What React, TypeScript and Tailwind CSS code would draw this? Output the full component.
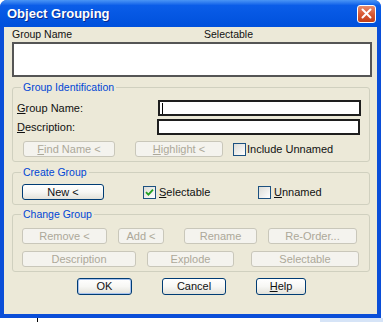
import React from 'react';

type BtnProps = {
  children: React.ReactNode;
  className?: string;
  disabled?: boolean;
  isDefault?: boolean;
};

function Btn({ children, className = '', disabled, isDefault }: BtnProps) {
  if (disabled) {
    return (
      <div className={`h-[16px] flex items-center justify-center rounded-[3px] border border-[#C9C7BA] bg-[#F4F3EE] text-[#ACA899] ${className}`}>
        {children}
      </div>
    );
  }
  return (
    <div
      className={`h-[16px] flex items-center justify-center rounded-[3px] border border-[#003C74] bg-linear-to-b from-white via-[#F7F7F4] to-[#E3E2DA] ${
        isDefault ? 'shadow-[inset_0_0_0_1px_#A7C2EE]' : ''
      } ${className}`}
    >
      {children}
    </div>
  );
}

function Check({ checked }: { checked?: boolean }) {
  return (
    <div className="w-[13px] h-[13px] border border-[#1C5180] bg-linear-to-br from-[#DCDCD7] to-white flex items-center justify-center shrink-0">
      {checked && (
        <svg width="9" height="9" viewBox="0 0 9 9">
          <path d="M1 4.2 L3.4 6.6 L8 1.6" fill="none" stroke="#21A121" strokeWidth={1.8} />
        </svg>
      )}
    </div>
  );
}

function Legend({ children }: { children: React.ReactNode }) {
  return <legend className="ml-[8px] px-[2px] text-[#0046D5] text-[10.5px] leading-[13px]">{children}</legend>;
}

export default function App() {
  return (
    <div className="w-[383px] h-[322px] bg-white relative overflow-hidden font-['Liberation_Sans',Arial,sans-serif] text-[11px] leading-[13px] text-[#111]">
      {/* Window frame */}
      <div className="w-[381px] h-[318px] bg-[#0A4ED8] rounded-t-[7px] flex flex-col px-[4px] pb-[4px]">
        {/* Title bar */}
        <div className="h-[27px] -mx-[4px] rounded-t-[7px] bg-linear-to-b from-[#4A95F5] via-[#0A5DE8] via-20% to-[#0050DC] flex items-center pl-[7px] pr-[5px] shrink-0">
          <span className="text-white font-bold text-[13px] leading-[15px] [text-shadow:1px_1px_#0B2C8F]">Object Grouping</span>
          <div className="ml-auto w-[19px] h-[18px] rounded-[3px] border border-white bg-linear-to-b from-[#E88C6C] via-[#D95A35] to-[#C13E17] flex items-center justify-center">
            <svg width="11" height="11" viewBox="0 0 11 11">
              <path d="M1.5 1.5 L9.5 9.5 M9.5 1.5 L1.5 9.5" stroke="white" strokeWidth={2} strokeLinecap="round" />
            </svg>
          </div>
        </div>

        {/* Client area */}
        <div className="flex-1 bg-[#ECE9D8] flex flex-col">
          {/* List header */}
          <div className="flex pl-[8px] pt-[1px] text-[10.5px]">
            <span className="w-[192px]">Group Name</span>
            <span>Selectable</span>
          </div>
          <div className="ml-[8px] mt-[1px] w-[360px] h-[35px] bg-white border-2 border-[#555]" />

          {/* Group Identification */}
          <fieldset className="ml-[8px] mt-[4px] w-[358px] border border-[#D0D0BF] rounded-[3px] pb-[4px]">
            <Legend>Group Identification</Legend>
            <div className="flex items-center mt-[6px]">
              <span className="w-[145px] pl-[4px]">
                <u>G</u>roup Name:
              </span>
              <div className="w-[203px] h-[16px] bg-white border-2 border-[#1E1E1E] flex items-center pl-[2px]">
                <div className="w-px h-[11px] bg-black" />
              </div>
            </div>
            <div className="flex items-center mt-[3px]">
              <span className="w-[144px] pl-[4px]">
                <u>D</u>escription:
              </span>
              <div className="w-[203px] h-[16px] bg-white border-2 border-[#1E1E1E]" />
            </div>
            <div className="flex items-center mt-[6px] pl-[10px]">
              <Btn disabled className="w-[92px]">
                <span>
                  <u>F</u>ind Name &lt;
                </span>
              </Btn>
              <Btn disabled className="w-[88px] ml-[20px]">
                <span>
                  <u>H</u>ighlight &lt;
                </span>
              </Btn>
              <div className="ml-[10px]">
                <Check />
              </div>
              <span className="ml-[1px]">Include Unnamed</span>
            </div>
          </fieldset>

          {/* Create Group */}
          <fieldset className="ml-[8px] mt-[4px] w-[358px] border border-[#D0D0BF] rounded-[3px] pb-[4px]">
            <Legend>Create Group</Legend>
            <div className="flex items-center mt-[5px] pl-[9px]">
              <Btn className="w-[82px]">New &lt;</Btn>
              <div className="ml-[39px] w-[115px] flex items-center">
                <Check checked />
                <span className="ml-[3px]">
                  <u>S</u>electable
                </span>
              </div>
              <div className="flex items-center">
                <Check />
                <span className="ml-[3px]">
                  <u>U</u>nnamed
                </span>
              </div>
            </div>
          </fieldset>

          {/* Change Group */}
          <fieldset className="ml-[8px] mt-[3px] w-[358px] border border-[#D0D0BF] rounded-[3px] pb-[4px]">
            <Legend>Change Group</Legend>
            <div className="flex items-center mt-[7px] pl-[9px]">
              <Btn disabled className="w-[85px]">Remove &lt;</Btn>
              <Btn disabled className="w-[46px] ml-[11px]">Add &lt;</Btn>
              <Btn disabled className="w-[73px] ml-[20px]">Rename</Btn>
              <Btn disabled className="w-[89px] ml-[11px]">Re-Order...</Btn>
            </div>
            <div className="flex items-center mt-[7px] pl-[9px]">
              <Btn disabled className="w-[114px]">Description</Btn>
              <Btn disabled className="w-[87px] ml-[11px]">Explode</Btn>
              <Btn disabled className="w-[108px] ml-[17px]">Selectable</Btn>
            </div>
          </fieldset>

          {/* Dialog buttons */}
          <div className="flex items-center mt-[6px] pl-[73px]">
            <Btn isDefault className="w-[55px] h-[17px]">OK</Btn>
            <Btn className="w-[64px] h-[17px] ml-[30px]">Cancel</Btn>
            <Btn className="w-[50px] h-[17px] ml-[30px]">
              <span>
                <u>H</u>elp
              </span>
            </Btn>
          </div>
        </div>
      </div>
      {/* stray bits of the desktop beneath */}
      <div className="absolute left-[37px] top-[318px] w-px h-[4px] bg-black" />
      <div className="absolute left-[320px] top-[318px] w-[63px] h-[4px] bg-[#D6E4F7]" />
    </div>
  );
}
